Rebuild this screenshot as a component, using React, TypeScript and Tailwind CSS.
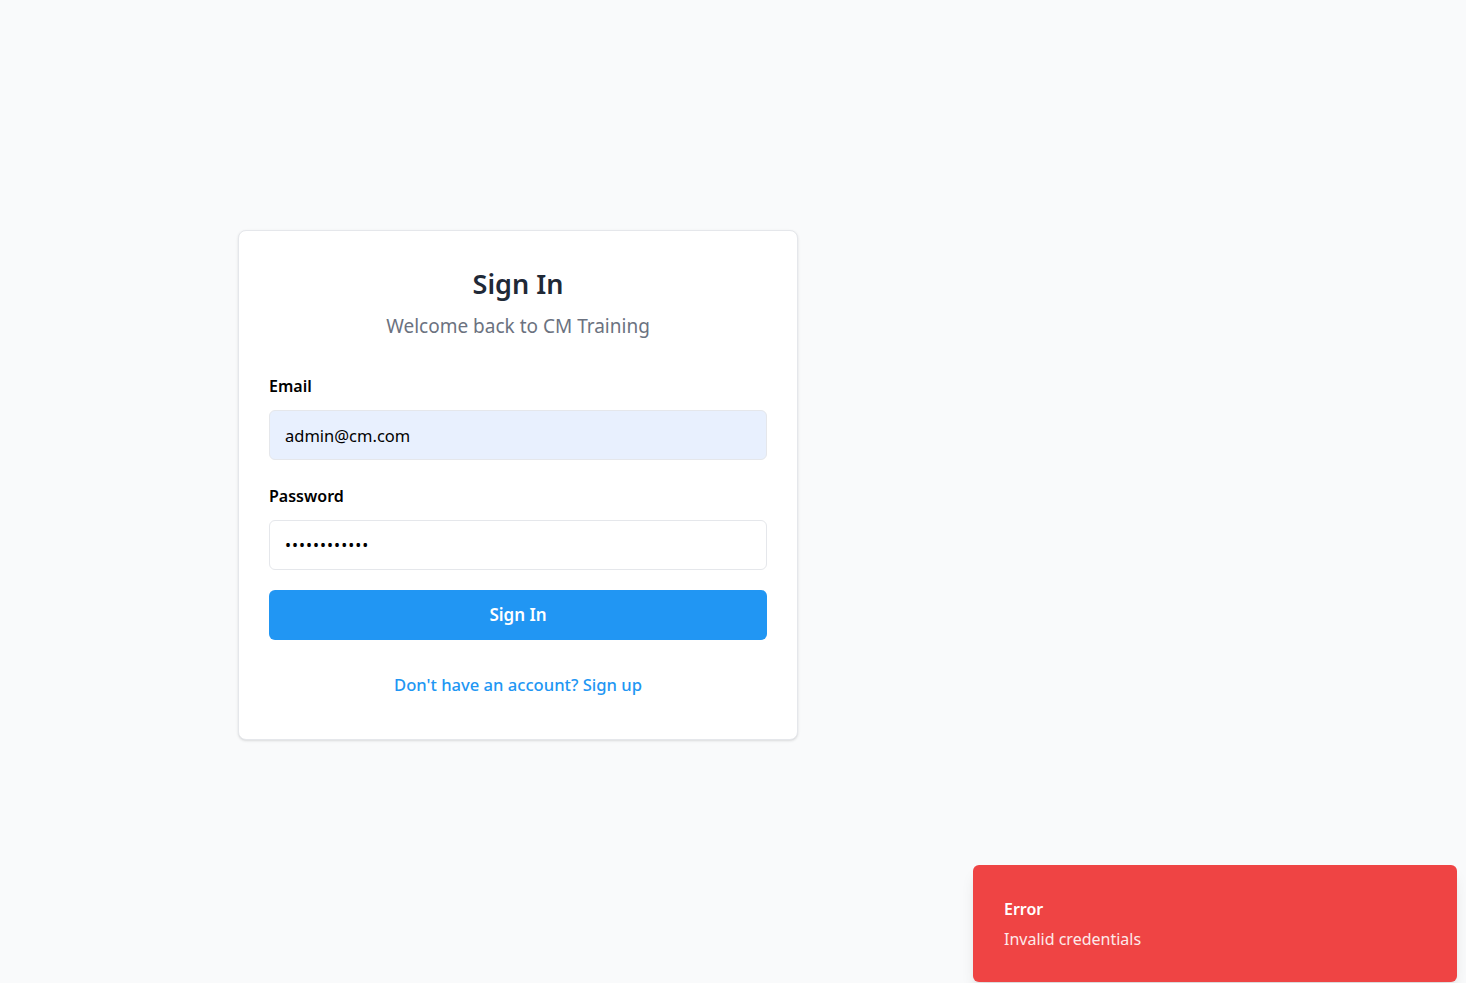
export default function App() {
  return (
    <div
      className="relative min-h-screen bg-[#f9fafb] flex items-center pl-[238px] pb-[13px]"
      style={{ fontFamily: '"Noto Sans", "Open Sans", sans-serif' }}
    >
      <div className="w-[560px] rounded-lg border border-[#e5e7eb] bg-white px-[30px] pt-[30px] pb-[41px] shadow-sm">
        <div className="text-center">
          <h1 className="text-[27px] leading-[46px] font-semibold text-[#1f2937]">Sign In</h1>
          <p className="mt-[4px] text-[19px] leading-[30px] text-[#6b7280]">Welcome back to CM Training</p>
        </div>
        <form className="mt-[33px]" onSubmit={(e) => e.preventDefault()}>
          <label className="block text-[16px] leading-[24px] font-semibold text-black">Email</label>
          <input
            type="email"
            defaultValue="admin@cm.com"
            className="mt-[12px] block h-[50px] w-full rounded-md border border-[#e5e7eb] bg-[#e8f0fe] px-[15px] text-[16.5px] text-black outline-none"
          />
          <label className="mt-[24px] block text-[16px] leading-[24px] font-semibold text-black">Password</label>
          <input
            type="password"
            defaultValue="password1234"
            className="mt-[12px] block h-[50px] w-full rounded-md border border-[#e5e7eb] bg-white px-[15px] text-[16px] tracking-[1px] text-black outline-none"
          />
          <button
            type="submit"
            className="mt-[20px] block h-[50px] w-full rounded-md bg-[#2196f3] text-[17px] font-semibold text-white"
          >
            Sign In
          </button>
        </form>
        <div className="mt-[32px] text-center text-[16.6px] leading-[26px] font-medium text-[#2196f3]">
          Don't have an account? Sign up
        </div>
      </div>
      <div className="absolute right-[9px] bottom-[1px] w-[484px] h-[117px] rounded-md bg-[#ef4444] px-[31px] pt-[33px] text-white shadow-lg">
        <div className="text-[16px] leading-[22px] font-semibold">Error</div>
        <div className="mt-[8px] text-[16px] leading-[22px] text-[#fdeaea]">Invalid credentials</div>
      </div>
    </div>
  )
}
